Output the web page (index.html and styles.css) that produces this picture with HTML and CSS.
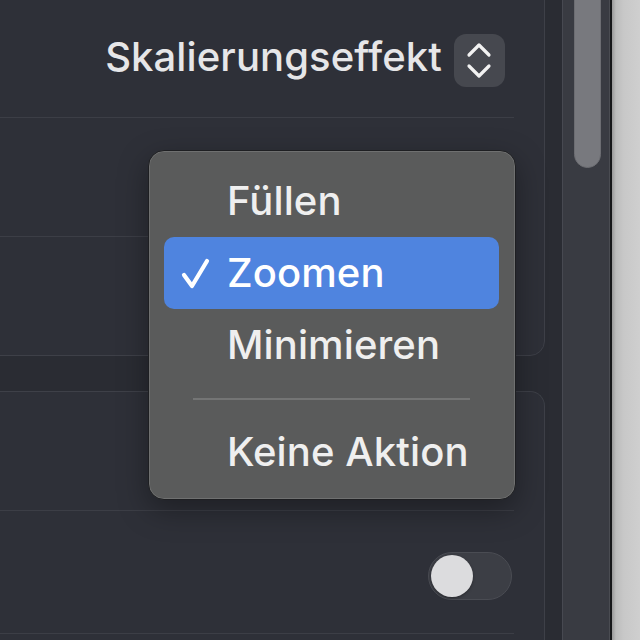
FILE: index.html
```html
<!DOCTYPE html>
<html lang="de">
<head>
<meta charset="utf-8">
<title>Skalierungseffekt</title>
<link rel="stylesheet" href="styles.css">
</head>
<body>
<div class="window">
  <main class="content">
    <section class="group group-top">
      <div class="row row-first">
        <div class="control">
          <span class="label">Skalierungseffekt</span>
          <span class="popup">
            <svg width="51" height="53" viewBox="0 0 51 53"><path d="M15 21 L25 11 L35 21 M15 32 L25 42 L35 32" fill="none" stroke="#f2f2f2" stroke-width="3.2" stroke-linecap="round" stroke-linejoin="round"/></svg>
          </span>
        </div>
      </div>
      <div class="row row-mid"></div>
      <div class="row row-last"></div>
    </section>
    <section class="group group-bottom">
      <div class="row row-mid"></div>
      <div class="row row-toggle">
        <div class="toggle"><span class="knob"></span></div>
      </div>
    </section>
  </main>
  <aside class="scrollbar"><div class="thumb"></div></aside>
  <div class="edge"></div>
  <div class="desktop"></div>
</div>

<div class="menu">
  <div class="item"><span class="check"></span><span class="text">Füllen</span></div>
  <div class="item selected"><span class="check"><svg width="34" height="34" viewBox="0 0 34 34"><path d="M4 19 L12 30 L27 5" fill="none" stroke="#ffffff" stroke-width="4.2" stroke-linecap="round" stroke-linejoin="round"/></svg></span><span class="text">Zoomen</span></div>
  <div class="item"><span class="check"></span><span class="text">Minimieren</span></div>
  <div class="separator"></div>
  <div class="item"><span class="check"></span><span class="text">Keine Aktion</span></div>
</div>
</body>
</html>
```

FILE: styles.css
```css
* { box-sizing: border-box; }

html, body {
  margin: 0;
  padding: 0;
  width: 640px;
  height: 640px;
  overflow: hidden;
  background: #2a2c33;
  font-family: Inter, "Noto Sans", "Liberation Sans", sans-serif;
}

.window {
  display: flex;
  width: 640px;
  height: 640px;
}

.content {
  width: 562px;
  height: 640px;
  flex: none;
  background: #2a2c33;
  display: flex;
  flex-direction: column;
  gap: 35px;
  padding-right: 17px;
  overflow: hidden;
}

.group {
  margin-left: -20px;
  background: #2e3038;
  border: 1px solid #3e4048;
  border-radius: 15px;
}

.group-top {
  margin-top: -22px;
  flex: none;
}

.group-bottom {
  flex: 1;
  min-height: 0;
  border-bottom: none;
  border-bottom-left-radius: 0;
  border-bottom-right-radius: 0;
}

.row {
  margin-right: 30px;
  border-bottom: 1px solid #3c3e46;
  display: flex;
  justify-content: flex-end;
}

.row-first {
  height: 139px;
  align-items: flex-end;
  padding-bottom: 30px;
  padding-right: 9px;
}

.row-mid {
  height: 119px;
}

.row-last {
  height: 118px;
  border-bottom: none;
}

.row-toggle {
  height: 123px;
  align-items: center;
  padding-top: 8px;
  padding-right: 2px;
}

.control {
  display: flex;
  align-items: center;
  gap: 12px;
}

.label {
  color: #e6e6e8;
  font-size: 40px;
  font-weight: 500;
  letter-spacing: 0.1px;
  line-height: 53px;
  position: relative;
  top: -4px;
}

.popup {
  display: block;
  width: 51px;
  height: 53px;
  border-radius: 12px;
  background: #46484f;
}

.popup svg { display: block; }

.toggle {
  width: 84px;
  height: 48px;
  border-radius: 24px;
  background: #3c3e45;
  border: 1px solid #4a4c53;
  padding: 2px;
  display: flex;
  align-items: center;
}

.knob {
  width: 42px;
  height: 42px;
  border-radius: 50%;
  background: #dcdcde;
  box-shadow: 0 1px 3px rgba(0,0,0,0.35);
}

.scrollbar {
  width: 48px;
  flex: none;
  background: #393b42;
  border-left: 1px solid #474951;
  border-right: 1px solid #4a4c52;
  padding-left: 11px;
}

.thumb {
  width: 27px;
  height: 190px;
  margin-top: -22px;
  border-radius: 14px;
  background: #78797e;
  border: 1px solid #6c6d72;
}

.edge {
  width: 2px;
  flex: none;
  background: #17181a;
}

.desktop {
  flex: 1;
  background: linear-gradient(to right, #9a9a9a 0, #bdbdbd 4px, #c8c8c8 12px, #cfcfcf 100%);
}

.menu {
  position: absolute;
  left: 148px;
  top: 150px;
  width: 368px;
  height: 350px;
  background: #5a5b5b;
  border: 1px solid #1e1f22;
  border-radius: 16px;
  box-shadow: inset 0 0 0 1px rgba(255,255,255,0.13), 0 10px 30px rgba(0,0,0,0.35);
  padding: 14px 16px 11px 15px;
  display: flex;
  flex-direction: column;
}

.item {
  height: 72px;
  flex: none;
  display: flex;
  align-items: center;
  border-radius: 10px;
  color: #efefef;
  font-size: 40px;
  font-weight: 500;
  letter-spacing: 0.1px;
}

.item.selected {
  background: #4f84df;
  color: #ffffff;
}

.check {
  width: 63px;
  flex: none;
  display: flex;
  align-items: center;
  padding-left: 16px;
}

.check svg { display: block; }

.text {
  position: relative;
  top: -1px;
}

.separator {
  height: 35px;
  flex: none;
  display: flex;
  align-items: center;
  padding: 0 29px;
}

.separator::before {
  content: "";
  display: block;
  width: 100%;
  height: 2px;
  background: #747575;
}
```
